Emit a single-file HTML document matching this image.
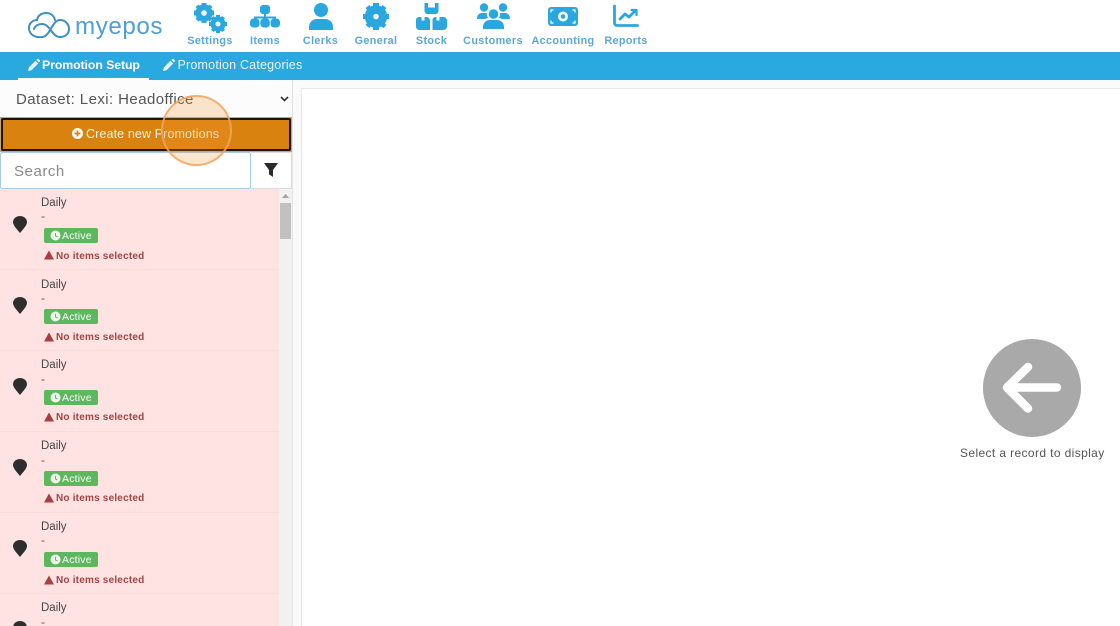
<!DOCTYPE html>
<html><head><meta charset="utf-8">
<style>
html,body{margin:0;padding:0;width:1120px;height:626px;overflow:hidden}
body{background:#fff;position:relative;font-family:"Liberation Sans",sans-serif;color:#444}
#w{position:absolute;left:0;top:0;width:1120px;height:626px;overflow:hidden}
.a{position:absolute;white-space:nowrap;line-height:1}
svg{position:absolute;overflow:visible}
.nl{font-size:10.8px;font-weight:bold;color:#5aa9d6;letter-spacing:.36px;top:35.5px;transform:translateX(-50%)}
.row{position:absolute;left:0;width:279px;height:81px;background:#ffe3e3;border-bottom:1px solid #f7dede;box-sizing:border-box}
.d{left:41px;font-size:11.5px;color:#444;letter-spacing:0}
.h{left:41px;font-size:12px;color:#555}
.b{left:44px;top:39px;width:54px;height:15px;background:#5cb85c;border-radius:2px}
.bt{left:62px;top:41.500px;font-size:10.5px;color:#fff;letter-spacing:.2px}
.w{left:56px;font-size:10px;font-weight:bold;color:#a04444;letter-spacing:.2px}
</style></head><body><div id="w">

<!-- logo -->
<svg style="left:20px;top:5px" width="60" height="40" viewBox="20 5 60 40" fill="none" stroke="#3f8fc4" stroke-width="2" stroke-linecap="round">
<path d="M42 37C33 38 29 33 29 28C29 23 33 20 37 20C38 15 42 13 46 13C51 13 54 16 55 20"/>
<path d="M42 37C50 37 52 20 60 20C65 20 69 24 69 29C69 34 65 37 60 37C52 37 50 24 42 24C38 24 35 26 34 29"/>
</svg>
<div class="a" style="left:75px;top:15px;font-size:24.200px;color:#4f9fd4;letter-spacing:.55px">myepos</div>

<!-- nav icons -->
<svg style="left:193px;top:3px" width="34" height="30" viewBox="0 0 34 30" fill="#2ba7df">
<circle cx="11" cy="10" r="5.700" fill="none" stroke="#2ba7df" stroke-width="5.800"/><path d="M8.500 0h5v4h-5zM8.500 16h5v4h-5zM1 7.500h4v5H1zM17 7.500h4v5h-4zM2.500 4l3-2.500 3 3-3 3zM16.500 1.500l3 2.500-3 3.500-3-3zM2.500 16l3-3.500 3 3-3 3zM19.500 16l-3 2.500-3-3 3-3z"/>
<circle cx="25" cy="21" r="5" fill="none" stroke="#2ba7df" stroke-width="5"/><path d="M23 12h4v3h-4zM23 27h4v3h-4zM16 19h3v4h-3zM31 19h3v4h-3zM18 15l3-2 2 3-3 2zM29 13l3 2-2 3-3-2zM18 27l2-3 3 2-2 3zM32 27l-3 2-2-3 3-2z"/>
</svg>
<svg style="left:250px;top:5px" width="30" height="23" viewBox="0 0 30 23" fill="#2ba7df">
<rect x="10" y="0" width="10" height="9" rx="3"/>
<path d="M14 8h2v3.500h10v4h-2V13.500H16v2h-2v-2H6v2H4v-4h10z"/>
<rect x="0" y="13.500" width="9.500" height="9" rx="3.500"/><rect x="10.300" y="13.500" width="9.500" height="9" rx="3.500"/><rect x="20.500" y="13.500" width="9.500" height="9" rx="3.500"/>
</svg>
<svg style="left:309px;top:3px" width="24" height="27" viewBox="0 0 24 27" fill="#2ba7df">
<circle cx="12" cy="7" r="7"/><path d="M0 27v-3c0-5 4-8 8-8h8c4 0 8 3 8 8v3z"/>
</svg>
<svg style="left:363px;top:3px" width="26" height="27" viewBox="0 0 26 27" fill="#2ba7df">
<circle cx="13" cy="13.500" r="7" fill="none" stroke="#2ba7df" stroke-width="8.500"/>
<path d="M10 0h6v5h-6zM10 22h6v5h-6zM0 11h5v5H0zM21 11h5v5h-5zM2.500 5l4-3 3 4-4 3zM19.500 2l4 3-3 4-4-3zM2.500 22l3-4 4 3-3 4zM23.500 22l-3 3-4-3 3-4z"/>
</svg>
<svg style="left:416px;top:3px" width="31" height="27" viewBox="0 0 31 27" fill="#2ba7df">
<path d="M8.500 0h3.500v4.500h7V0h3.500v8a3 3 0 0 1-3 3h-8a3 3 0 0 1-3-3z"/>
<path d="M0 17a3 3 0 0 1 3-3h2.500v3.500h3V14h1a4 4 0 0 1 4.500 3v10H3.500a3.500 3.500 0 0 1-3.500-3.500z"/>
<path d="M16.500 17a3 3 0 0 1 3-3h1v3.500h3V14h3.500a4 4 0 0 1 4 3v6.500a3.500 3.500 0 0 1-3.500 3.500H16.500z"/>
</svg>
<svg style="left:477px;top:3px" width="33" height="27" viewBox="0 0 33 27" fill="#2ba7df">
<circle cx="7" cy="4.500" r="4.200"/><circle cx="26" cy="4.500" r="4.200"/><circle cx="16.500" cy="11" r="4.800"/>
<path d="M0 16c0-4 2-6 5-6h5c-.500 2 0 4 1.500 5-2 .300-3 .800-3.500 1zM33 16c0-4-2-6-5-6h-5c.500 2 0 4-1.500 5 2 .300 3 .800 3.500 1zM6 26v-2c0-4 3-7 7-7h7c4 0 7 3 7 7v2z"/>
</svg>
<svg style="left:548px;top:7px" width="30" height="19" viewBox="0 0 30 19">
<rect width="30" height="19" rx="3" fill="#2ba7df"/>
<circle cx="15" cy="9.500" r="5" fill="#fff"/><circle cx="15" cy="9.500" r="2.300" fill="#2ba7df"/>
<path d="M3 5.500V3h2.500M27 5.500V3h-2.500M3 13.500V16h2.500M27 13.500V16h-2.500" fill="none" stroke="#fff" stroke-width="1.200"/>
</svg>
<svg style="left:613px;top:4px" width="27" height="24" viewBox="0 0 27 24" fill="none" stroke="#2ba7df" stroke-width="2.800" stroke-linecap="round" stroke-linejoin="round">
<path d="M1.500 2v17a2.500 2.500 0 0 0 2.500 2.500h20.500"/>
<path d="M7 15l5-5 4 3 6.500-6.500"/><path d="M18.500 6h5v5" stroke-width="2.200"/>
</svg>

<div class="a nl" style="left:210px">Settings</div>
<div class="a nl" style="left:265px">Items</div>
<div class="a nl" style="left:320.500px">Clerks</div>
<div class="a nl" style="left:376px">General</div>
<div class="a nl" style="left:431.500px">Stock</div>
<div class="a nl" style="left:493px">Customers</div>
<div class="a nl" style="left:563px">Accounting</div>
<div class="a nl" style="left:626px">Reports</div>

<!-- blue bar -->
<div class="a" style="left:0;top:52px;width:1120px;height:28px;background:#2aa9e0"></div>
<div class="a" style="left:18px;top:78px;width:131px;height:2px;background:#fff"></div>
<svg style="left:28px;top:59px" width="12" height="12" viewBox="0 0 12 12" fill="#e8f5fb"><path d="M0 12l.8-3.500L7.500 1.800l2.700 2.700-6.700 6.700zM8.300 1l1-1a1 1 0 0 1 1.200 0l1.300 1.300a1 1 0 0 1 0 1.200l-1 1z"/></svg>
<div class="a" style="left:42px;top:59px;font-size:12.300px;font-weight:bold;color:#fff;letter-spacing:-.08px">Promotion Setup</div>
<svg style="left:163px;top:59px" width="12" height="12" viewBox="0 0 12 12" fill="#e8f5fb"><path d="M0 12l.8-3.500L7.500 1.800l2.700 2.700-6.700 6.700zM8.300 1l1-1a1 1 0 0 1 1.200 0l1.300 1.300a1 1 0 0 1 0 1.200l-1 1z"/></svg>
<div class="a" style="left:177.500px;top:59px;font-size:12.500px;color:#eaf6fc;letter-spacing:.2px">Promotion Categories</div>

<!-- sidebar bg -->
<div class="a" style="left:0;top:80px;width:293px;height:546px;background:#fcfcfc"></div>
<div class="a" style="left:293px;top:80px;width:827px;height:546px;background:#fafafa"></div>
<div class="a" style="left:301px;top:88px;width:819px;height:538px;background:#fff;border-left:1px solid #e8e8e8;border-top:1px solid #e8e8e8;box-sizing:border-box"></div>

<!-- dataset -->
<div class="a" style="left:16px;top:91.500px;font-size:15px;color:#555;letter-spacing:.42px">Dataset: Lexi: Headoffice</div>
<svg style="left:280px;top:96px" width="9" height="6" viewBox="0 0 9 6" fill="none" stroke="#333" stroke-width="1.600"><path d="M1 1l3.500 3.500L8 1"/></svg>

<!-- create button -->
<div class="a" style="left:0;top:117px;width:292px;height:35px;background:#d9820f;border:1px solid #c9a678;box-sizing:border-box"><div style="position:absolute;left:0;top:0;right:0;bottom:0;border:2px solid #1c1408;border-radius:2px"></div></div>
<svg style="left:72px;top:128px" width="11" height="11" viewBox="0 0 11 11"><circle cx="5.500" cy="5.500" r="5.500" fill="#fff"/><path d="M5.500 2.500v6M2.500 5.500h6" stroke="#d9820f" stroke-width="1.700"/></svg>
<div class="a" style="left:86px;top:128px;font-size:12.500px;color:#fdf2e4;letter-spacing:.12px">Create new Promotions</div>

<!-- search -->
<div class="a" style="left:251px;top:152px;width:41px;height:37px;background:#fff;border:1px solid #dcdcdc;border-left:0;box-sizing:border-box"></div>
<div class="a" style="left:0;top:152px;width:251px;height:37px;background:#fff;border:1px solid #a9cbe4;box-sizing:border-box;border-radius:2px"></div>
<div class="a" style="left:14px;top:163.500px;font-size:15px;color:#8a8a8a;letter-spacing:.55px">Search</div>
<svg style="left:264px;top:163px" width="14" height="14" viewBox="0 0 14 13" preserveAspectRatio="none" fill="#2a2a2a"><path d="M0 0h14L9 6.500V13L5 10.500V6.500z"/></svg>

<!-- list -->
<div class="a" style="left:0;top:189px;width:279px;height:437px;background:#ffe3e3"></div>

<div class="row" style="top:189px"><div class="a d" style="top:9px">Daily</div><div class="a h" style="top:21px">-</div><div class="a b"></div><svg style="left:50px;top:41px" width="11" height="11" viewBox="0 0 11 11"><circle cx="5.500" cy="5.500" r="5" fill="#eef8ee"/><path d="M5.500 3v3l2 1" stroke="#5cb85c" fill="none"/></svg><div class="a bt">Active</div><svg style="left:44px;top:61px" width="10" height="10" viewBox="0 0 10 10" fill="#a93e3e"><path d="M5 .5L10 9.500H0z"/></svg><div class="a w" style="top:62.500px">No items selected</div><svg style="left:13px;top:27px" width="14" height="17" viewBox="0 0 14 18" preserveAspectRatio="none" fill="#2e2e2e"><path d="M7 18C4 14 0 10 0 6.500A7 6.500 0 0 1 14 6.500C14 10 10 14 7 18z"/></svg></div>
<div class="row" style="top:270px"><div class="a d" style="top:10px">Daily</div><div class="a h" style="top:22px">-</div><div class="a b"></div><svg style="left:50px;top:41px" width="11" height="11" viewBox="0 0 11 11"><circle cx="5.500" cy="5.500" r="5" fill="#eef8ee"/><path d="M5.500 3v3l2 1" stroke="#5cb85c" fill="none"/></svg><div class="a bt">Active</div><svg style="left:44px;top:62px" width="10" height="10" viewBox="0 0 10 10" fill="#a93e3e"><path d="M5 .5L10 9.500H0z"/></svg><div class="a w" style="top:63px">No items selected</div><svg style="left:13px;top:27px" width="14" height="17" viewBox="0 0 14 18" preserveAspectRatio="none" fill="#2e2e2e"><path d="M7 18C4 14 0 10 0 6.500A7 6.500 0 0 1 14 6.500C14 10 10 14 7 18z"/></svg></div>
<div class="row" style="top:351px"><div class="a d" style="top:9px">Daily</div><div class="a h" style="top:22px">-</div><div class="a b"></div><svg style="left:50px;top:41px" width="11" height="11" viewBox="0 0 11 11"><circle cx="5.500" cy="5.500" r="5" fill="#eef8ee"/><path d="M5.500 3v3l2 1" stroke="#5cb85c" fill="none"/></svg><div class="a bt">Active</div><svg style="left:44px;top:61px" width="10" height="10" viewBox="0 0 10 10" fill="#a93e3e"><path d="M5 .5L10 9.500H0z"/></svg><div class="a w" style="top:62px">No items selected</div><svg style="left:13px;top:27px" width="14" height="17" viewBox="0 0 14 18" preserveAspectRatio="none" fill="#2e2e2e"><path d="M7 18C4 14 0 10 0 6.500A7 6.500 0 0 1 14 6.500C14 10 10 14 7 18z"/></svg></div>
<div class="row" style="top:432px"><div class="a d" style="top:9px">Daily</div><div class="a h" style="top:22px">-</div><div class="a b"></div><svg style="left:50px;top:41px" width="11" height="11" viewBox="0 0 11 11"><circle cx="5.500" cy="5.500" r="5" fill="#eef8ee"/><path d="M5.500 3v3l2 1" stroke="#5cb85c" fill="none"/></svg><div class="a bt">Active</div><svg style="left:44px;top:61px" width="10" height="10" viewBox="0 0 10 10" fill="#a93e3e"><path d="M5 .5L10 9.500H0z"/></svg><div class="a w" style="top:62px">No items selected</div><svg style="left:13px;top:27px" width="14" height="17" viewBox="0 0 14 18" preserveAspectRatio="none" fill="#2e2e2e"><path d="M7 18C4 14 0 10 0 6.500A7 6.500 0 0 1 14 6.500C14 10 10 14 7 18z"/></svg></div>
<div class="row" style="top:513px"><div class="a d" style="top:9px">Daily</div><div class="a h" style="top:21px">-</div><div class="a b"></div><svg style="left:50px;top:41px" width="11" height="11" viewBox="0 0 11 11"><circle cx="5.500" cy="5.500" r="5" fill="#eef8ee"/><path d="M5.500 3v3l2 1" stroke="#5cb85c" fill="none"/></svg><div class="a bt">Active</div><svg style="left:44px;top:62px" width="10" height="10" viewBox="0 0 10 10" fill="#a93e3e"><path d="M5 .5L10 9.500H0z"/></svg><div class="a w" style="top:63px">No items selected</div><svg style="left:13px;top:27px" width="14" height="17" viewBox="0 0 14 18" preserveAspectRatio="none" fill="#2e2e2e"><path d="M7 18C4 14 0 10 0 6.500A7 6.500 0 0 1 14 6.500C14 10 10 14 7 18z"/></svg></div>
<div class="row" style="top:594px;height:32px;border-bottom:0;overflow:hidden"><div class="a d" style="top:9px">Daily</div><div class="a h" style="top:22px">-</div><svg style="left:13px;top:27px" width="14" height="17" viewBox="0 0 14 18" preserveAspectRatio="none" fill="#2e2e2e"><path d="M7 18C4 14 0 10 0 6.500A7 6.500 0 0 1 14 6.500C14 10 10 14 7 18z"/></svg></div>

<!-- scrollbar -->
<div class="a" style="left:279px;top:189px;width:13px;height:437px;background:#f1f1f1"></div>
<div class="a" style="left:292px;top:80px;width:1px;height:546px;background:#e4e4e4"></div>
<svg style="left:282px;top:194px" width="7" height="5" viewBox="0 0 7 5" fill="#a3a3a3"><path d="M3.500 0L7 4H0z"/></svg>
<div class="a" style="left:280px;top:203px;width:11px;height:36px;background:#c1c1c1"></div>

<!-- highlight circle -->
<div class="a" style="left:160.500px;top:95px;width:71px;height:71px;border-radius:50%;background:rgba(248,150,50,.24);border:2.500px solid rgba(245,165,95,.85);box-sizing:border-box"></div>

<!-- placeholder -->
<svg style="left:983px;top:339px" width="98" height="98" viewBox="0 0 98 98">
<circle cx="49" cy="49" r="49" fill="#a9a9a9"/>
<path d="M28 48.500H74M45 28L24 48.500L45 69.500" fill="none" stroke="#fff" stroke-width="8.500" stroke-linecap="round" stroke-linejoin="round"/>
</svg>
<div class="a" style="left:960px;top:447px;font-size:12px;color:#555;letter-spacing:.38px">Select a record to display</div>

</div></body></html>
